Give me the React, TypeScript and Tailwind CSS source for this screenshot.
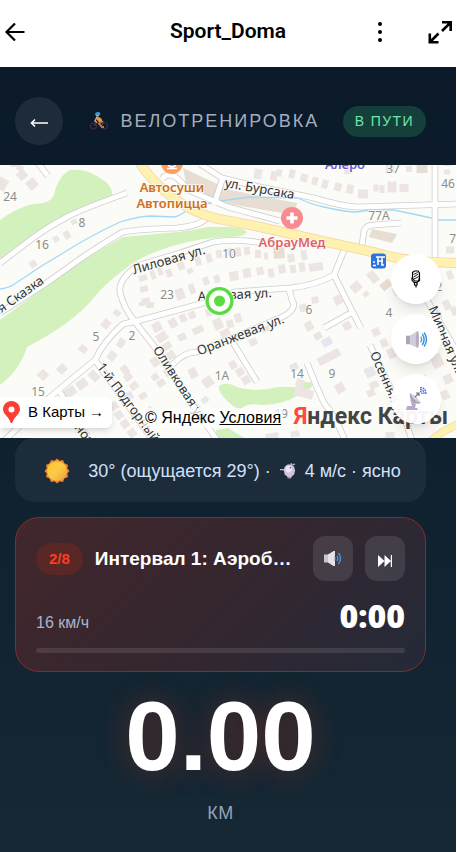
import React, { useState } from "react";

type Building = [number, number, number, number, number, string?];

interface MapLabel {
  text: string;
  x: number;
  y: number;
  angle?: number;
  size?: number;
  color?: string;
  weight?: number;
}

const TAN = "#e7ddd2";
const PALE = "#e8e8e8";

// x, y del centro, ancho, alto, rotación
const buildings: Building[] = [
  [22, 175, 9, 9, -40], [32, 184, 10, 10, 50], [2, 184, 10, 12, 30], [20, 168, 6, 6, 40], [14, 165, 8, 4, 0],
  [74, 222, 6, 5, -25], [67, 235, 6, 8, -30], [56, 239, 6, 6, -30, PALE], [33, 264, 7, 7, -35],
  [143, 278, 8, 6, -15], [144, 289, 8, 6, -15], [146, 301, 8, 6, -15], [153, 275, 5, 9, -20], [160, 271, 5, 9, -20],
  [169, 273, 6, 8, -20], [181, 266, 7, 8, -20], [190, 271, 6, 5, -20], [198, 261, 6, 9, -15], [209, 258, 6, 9, -15],
  [219, 254, 6, 8, -10], [180, 294, 9, 11, -20], [192, 289, 6, 10, -20], [206, 281, 6, 8, -20], [217, 279, 6, 8, -15],
  [230, 252, 5, 8, -10], [238, 252, 6, 9, -10], [247, 251, 6, 8, -10], [258, 254, 6, 8, 0], [266, 256, 4, 7, -8],
  [279, 253, 11, 11, -5, TAN], [291, 258, 7, 8, -8], [304, 255, 6, 10, -8], [234, 276, 9, 9, -10], [247, 273, 8, 9, -10],
  [260, 271, 7, 8, -10], [271, 273, 6, 9, -10], [282, 269, 7, 9, -10], [293, 269, 6, 8, -10], [302, 267, 6, 9, -10], [316, 267, 14, 8, -8],
  [258, 174, 8, 10, 10, PALE], [279, 173, 6, 7, 12], [292, 174, 6, 9, 12], [274, 176, 7, 9, 12], [304, 178, 7, 8, 14],
  [315, 181, 6, 8, 14], [325, 184, 6, 9, 15], [338, 187, 7, 8, 15], [350, 189, 7, 9, 15], [363, 194, 10, 9, 0],
  [348, 170, 8, 8, -8], [376, 188, 5, 7, 0], [382, 189, 5, 8, 0], [392, 187, 9, 11, 0], [404, 188, 9, 8, 0],
  [409, 169, 6, 6, 0], [422, 168, 11, 10, 0, TAN], [390, 169, 9, 8, 0], [447, 164, 8, 4, 0], [447, 172, 6, 5, 0],
  [373, 277, 8, 12, -40], [356, 287, 10, 9, -40], [366, 294, 6, 5, -40], [386, 285, 11, 8, -40, TAN], [397, 291, 8, 8, -30],
  [450, 250, 8, 7, 0], [450, 275, 6, 9, -20], [447, 305, 7, 10, -25], [454, 311, 6, 9, -25], [437, 315, 8, 10, -28],
  [106, 324, 8, 9, 40], [117, 313, 7, 6, 40], [83, 349, 8, 7, 40], [62, 369, 8, 9, 45], [43, 375, 9, 9, 45],
  [121, 343, 7, 9, 35], [112, 356, 8, 9, 40, PALE], [94, 376, 11, 8, 45], [82, 384, 11, 9, -35], [70, 392, 12, 9, -35],
  [125, 370, 7, 9, -35], [128, 377, 8, 7, -35], [134, 386, 8, 7, -35], [143, 396, 8, 6, -35], [129, 396, 8, 8, -35],
  [114, 406, 8, 8, -35], [119, 415, 8, 8, -35], [125, 424, 8, 8, -35], [132, 433, 8, 8, -35], [150, 411, 7, 8, -35],
  [102, 421, 8, 8, 45], [85, 433, 8, 7, 45], [60, 414, 10, 8, 40], [70, 420, 10, 7, 40],
  [155, 362, 8, 9, -35], [161, 383, 8, 7, -35], [155, 377, 7, 7, -35], [168, 372, 8, 8, -35], [171, 355, 8, 8, -35],
  [162, 337, 11, 9, -35], [167, 346, 9, 7, -35], [173, 323, 8, 9, -30], [150, 305, 8, 6, 0], [142, 304, 6, 4, 0],
  [157, 327, 9, 9, -30], [183, 318, 7, 8, -25], [192, 315, 7, 7, -25], [198, 330, 11, 7, -25], [182, 337, 8, 7, -25],
  [218, 324, 9, 11, -25], [225, 333, 10, 7, -25], [209, 312, 7, 8, -20], [193, 373, 8, 10, -25], [208, 382, 10, 10, -35],
  [205, 400, 7, 6, -40, PALE], [197, 408, 7, 7, -40], [240, 372, 8, 8, -30], [233, 365, 7, 8, -30], [246, 380, 8, 8, -30],
  [230, 324, 7, 8, -15], [238, 318, 7, 9, -15], [246, 334, 8, 8, -25], [253, 342, 8, 7, -25], [265, 328, 8, 8, -20],
  [309, 326, 8, 9, -30], [318, 336, 8, 7, -30], [327, 342, 10, 8, -30, "#e6e6ec"], [329, 357, 24, 8, -28],
  [294, 367, 8, 7, -30], [300, 383, 8, 8, 25], [304, 393, 19, 9, 15], [340, 388, 9, 10, -30],
  [376, 332, 8, 8, -25], [384, 343, 7, 8, -25], [392, 353, 9, 10, -25], [370, 372, 10, 10, -25, PALE], [374, 385, 9, 7, -25],
  [371, 393, 8, 7, -25], [347, 326, 8, 8, -30], [338, 300, 8, 9, -30], [303, 308, 7, 8, -10], [315, 300, 7, 7, -10],
  [437, 361, 11, 13, -25], [448, 379, 9, 9, -25], [424, 380, 8, 9, -25], [445, 395, 8, 9, -25],
  [272, 436, 13, 6, -10], [295, 434, 9, 6, -10], [390, 435, 9, 6, 0], [420, 408, 7, 8, 0],
];

const roads = [
  "M0 263 L33 238 Q48 227 67 217 Q82 209 127 193",
  "M0 313 L45 284 L83 257 Q112 238 123 232 Q142 229 177 228 Q200 226 208 217",
  "M262 243 Q236 238 213 242 L180 253 L137 266 Q118 280 120 292 Q123 307 135 322 L157 350 L187 397 L217 440",
  "M5 440 L50 397 L95 360 Q103 342 123 324 L137 321 L200 304 L234 292 L290 288 Q317 285 334 275 L345 248",
  "M95 360 L153 440",
  "M172 365 Q184 352 197 352 L240 335 L282 317 Q298 309 292 300 L289 289",
  "M334 275 L349 305 L361 328 M324 328 L351 313",
  "M232 341 L257 382",
  "M307 363 L316 385 L324 403 Q334 414 345 440",
  "M370 345 L404 417 L412 440",
  "M200 164 L222 178 L260 187 L314 198 Q340 206 357 207 L458 204",
  "M435 163 L435 260 M435 163 L435 177",
  "M362 245 L364 231 Q366 225 374 225 L401 223",
  "M405 262 L427 300 L458 354",
  "M38 163 L48 176",
  "M162 179 Q171 167 188 190 L228 207 L280 221",
  "M214 205 L222 180",
  "M60 392 L87 440",
];

const labels: MapLabel[] = [
  { text: "24", x: 10, y: 201, color: "#8d8d8d" },
  { text: "8", x: 82, y: 227, color: "#8d8d8d" },
  { text: "16", x: 42, y: 249, color: "#8d8d8d" },
  { text: "23", x: 167, y: 299, color: "#8d8d8d" },
  { text: "10", x: 229, y: 258, color: "#8d8d8d" },
  { text: "5", x: 96, y: 341, color: "#8d8d8d" },
  { text: "2", x: 132, y: 340, color: "#8d8d8d" },
  { text: "15", x: 38, y: 396, color: "#8d8d8d" },
  { text: "1А", x: 222, y: 380, color: "#8d8d8d" },
  { text: "6", x: 309, y: 314, color: "#8d8d8d" },
  { text: "4", x: 389, y: 317, color: "#8d8d8d" },
  { text: "14", x: 297, y: 378, color: "#8d8d8d" },
  { text: "9", x: 332, y: 378, color: "#8d8d8d" },
  { text: "19", x: 281, y: 418, color: "#8d8d8d" },
  { text: "37", x: 393, y: 173, color: "#8d8d8d" },
  { text: "46", x: 448, y: 188, color: "#8d8d8d" },
  { text: "77А", x: 379, y: 220, color: "#8d8d8d" },
  { text: "71", x: 456, y: 243, color: "#8d8d8d" },
  { text: "2", x: 439, y: 291, color: "#8d8d8d" },
  { text: "ая Сказка", x: 20, y: 300, angle: -35, size: 13 },
  { text: "Лиловая ул.", x: 170, y: 264, angle: -16, size: 13 },
  { text: "ул. Бурсака", x: 259, y: 193, angle: 10, size: 13 },
  { text: "Айвовая ул.", x: 235, y: 299, angle: -3, size: 13 },
  { text: "Оранжевая ул.", x: 242, y: 339, angle: -21, size: 13 },
  { text: "Оливковая ул.", x: 177, y: 387, angle: 57, size: 13 },
  { text: "1-й Подгорный пер.", x: 134, y: 417, angle: 53, size: 13 },
  { text: "Осенняя ул.", x: 385, y: 388, angle: 66, size: 13 },
  { text: "Мирная ул.", x: 442, y: 341, angle: 67, size: 13 },
  { text: "ном", x: 82, y: 438, angle: 52, size: 13 },
  { text: "Автосуши", x: 172, y: 192, color: "#cf6f22", size: 13, weight: 600 },
  { text: "Автопицца", x: 172, y: 208, color: "#cf6f22", size: 13, weight: 600 },
  { text: "АбрауМед", x: 292, y: 247, color: "#e0616b", size: 13, weight: 600 },
  { text: "Алеро", x: 345, y: 169, color: "#6f5bd8", size: 13, weight: 600 },
];

function StreetMap() {
  return (
    <svg
      className="block h-full w-full bg-[#fbfcf7]"
      viewBox="0 165 456 273"
      preserveAspectRatio="xMidYMid slice"
      fontFamily='"Noto Sans", "Open Sans", sans-serif'
    >
      {/* Zonas verdes */}
      <g fill="#d3f1bd">
        <path d="M0 220 Q18 207 33 204 Q50 204 54 195 Q58 176 70 170 Q86 168 100 178 Q114 186 112 197 L67 215 Q40 228 0 259Z" />
        <path d="M0 320 L45 287 L83 260 L123 237 L167 233 Q190 231 207 227 L230 227 Q244 228 247 232 Q244 237 229 237 Q200 238 180 244 Q150 252 133 263 Q105 283 92 300 Q70 325 27 347 Q20 370 0 385Z" />
        <path d="M219 386 Q226 381 237 387 Q255 393 278 387 L296 387 Q303 380 312 383 Q315 388 300 394 Q284 405 262 405 Q246 402 240 410 Q225 402 219 390Z" />
        <path d="M216 430 L228 428 L244 438 L216 438Z" />
      </g>
      <path d="M183 168 L230 190 L297 203 L294 215 L229 204 L213 199 L186 183Z" fill={TAN} />
      <path d="M372 229 L397 234 L392 243 L369 237Z" fill={TAN} />
      {buildings.map(([x, y, w, h, r, color], i) => (
        <rect
          key={i}
          x={x - w / 2}
          y={y - h / 2}
          width={w}
          height={h}
          fill={color || "#ece5e3"}
          transform={`rotate(${r} ${x} ${y})`}
        />
      ))}
      <path
        d="M0 289 Q8 288 13 285 L40 267 L63 253 Q90 236 120 222 Q140 216 150 216 L175 217 Q183 214 187 210 Q200 203 250 197 L298 198 Q310 204 324 207 Q345 212 357 212 Q372 209 394 210 L427 217 L440 220 L457 220"
        fill="none"
        stroke="#a3d8f5"
        strokeWidth="1.3"
      />
      {/* Calles */}
      <g fill="none" strokeLinejoin="round">
        {roads.map((d) => (
          <path key={d} d={d} stroke="#cfcfcf" strokeWidth="6.6" />
        ))}
        {roads.map((d) => (
          <path key={d} d={d} stroke="#ffffff" strokeWidth="5" />
        ))}
        <path d="M138 160 Q155 188 187 207 Q210 219 230 221 L260 227 L327 242 L377 253 Q405 262 458 263" stroke="#f4d3a0" strokeWidth="10" />
        <path d="M138 160 Q155 188 187 207 Q210 219 230 221 L260 227 L327 242 L377 253 Q405 262 458 263" stroke="#fff1b0" strokeWidth="8.6" />
        <path d="M428 443 Q440 432 460 423" stroke="#f4d3a0" strokeWidth="8" />
        <path d="M428 443 Q440 432 460 423" stroke="#fff1b0" strokeWidth="6.6" />
      </g>
      {labels.map((label) => (
        <text
          key={`${label.text}-${label.x}`}
          x={label.x}
          y={label.y}
          textAnchor="middle"
          fontSize={label.size || 12}
          fontWeight={label.weight || 400}
          fill={label.color || "#333333"}
          stroke="#fcfcf8"
          strokeWidth="1.6"
          strokeLinejoin="round"
          paintOrder="stroke"
          transform={label.angle ? `rotate(${label.angle} ${label.x} ${label.y})` : undefined}
        >
          {label.text}
        </text>
      ))}
      {/* Puntos de interés */}
      <circle cx="172" cy="163" r="11" fill="#ff9d5c" />
      <path d="M168 162h8q0 5-4 5t-4-5zM167 168.500h10" stroke="#fff" strokeWidth="1.500" fill="none" />
      <circle cx="292" cy="218" r="11" fill="#f78b8f" />
      <path d="M292 212.500v11M286.500 218h11" stroke="#fff" strokeWidth="3.600" />
      <rect x="371" y="253.500" width="15" height="15" rx="3" fill="#2f73e0" />
      <path d="M376 257h9M378 257v8M382 257v8M377 261h6M373 262h2M373 265.500h3M384 265h-3" stroke="#fff" strokeWidth="1.500" />
      {/* Posición actual */}
      <circle cx="219.500" cy="301" r="15" fill="#fff" />
      <circle cx="219.500" cy="301" r="12.400" fill="#fff" stroke="#58dc40" strokeWidth="3.400" />
      <circle cx="219.500" cy="301" r="5.500" fill="#58dc40" />
    </svg>
  );
}

function SpeakerIcon({ className }: { className: string }) {
  return (
    <svg className={className} viewBox="0 0 24 20" fill="none">
      <path d="M1 6h5v9H1z" fill="#aaa2b5" />
      <path d="M5 6l8-5q1.500 0 1.500 2v14q0 2-1.500 2l-8-4z" fill="#d3ccdb" />
      <path d="M12 1.500q2.500 0 2.500 8.500T12 18.500q-1.500-8 0-17z" fill="#b5acbf" />
      <path d="M16.500 7q2 3 0 6" stroke="#5b9fe0" strokeWidth="1.400" />
      <path d="M18 4q4 6 0 12M20 2.500q5 7.500 0 15" stroke="#3b8fe2" strokeWidth="1.500" />
    </svg>
  );
}

// altavoz claro para fondos oscuros
function SpeakerLightIcon() {
  return (
    <svg className="h-[15px] w-[18px]" viewBox="0 0 18 15" fill="none">
      <path d="M0 3.500h5v8H0z" fill="#c9c3d2" />
      <path d="M4 3.500L9.500 0H11v15H9.500L4 11.500z" fill="#e6e2ea" />
      <path d="M10.500 4.500q2 3 0 6z" fill="#9d95a8" />
      <path d="M13 5q1.500 2.500 0 5M14.500 2q4 5.500 0 11" stroke="#3f97ee" strokeWidth="1.400" />
    </svg>
  );
}

function MicIcon() {
  return (
    <svg className="h-[18px] w-[12px]" viewBox="0 0 12 18" fill="none" stroke="#000">
      <path d="M2.500 2.500L4.500 1H8l1.500 2v5L8.500 11h-4L2.500 8z" fill="#fff" strokeWidth="1.100" />
      <path d="M3.500 4.500l4-2M3.500 7l5-3M4 9l5-2.500" strokeWidth=".9" />
      <path d="M2 7.500V10L4 12.500h3l2.500-2V8M4.500 12.500v2.500H7v-2.500M6 15v2.500" strokeWidth="1.200" />
    </svg>
  );
}

function SatelliteIcon() {
  return (
    <svg className="h-[24px] w-[22px]" viewBox="0 0 22 24" fill="none">
      <path d="M5 12l6 5-1 4h2l1 2H1l1-4h5z" fill="#b9aac9" />
      <path d="M5 6q-1 6 3 9t8 1z" fill="#aaa0ba" />
      <path d="M5 6q6 2 11 10-7-1-11-10z" fill="#d5ccdd" />
      <path d="M10 10l4-4M11 6h3v3" stroke="#77707f" strokeWidth="1.200" />
      <path d="M15 4.500q2 0 2 2.500M15 2.500q4 0 4 4.500M15 .7q6 0 6 6.300" stroke="#3866d8" strokeWidth="1.200" strokeDasharray="2 .6" />
    </svg>
  );
}

function CyclistIcon() {
  return (
    <svg className="h-[18px] w-[18px] shrink-0" viewBox="0 0 18 18" fill="none">
      <circle cx="3.500" cy="14" r="3" stroke="#4b3049" strokeWidth="1" />
      <circle cx="14.500" cy="14" r="3" stroke="#4b3049" strokeWidth="1" />
      <path d="M4 14l3-4 4 4 3-5" stroke="#87304b" strokeWidth="1" />
      <path d="M6.500 4.500L11 6l2 4-3 1-3-3z" fill="#e29a3d" />
      <path d="M7 5l-2 4 2 1.500" stroke="#e8a36c" strokeWidth="1.500" />
      <path d="M11.500 9.500L9 11.500l3 3.500h2" stroke="#b87952" strokeWidth="1.800" />
      <circle cx="7.500" cy="3" r="1.800" fill="#d99a72" />
      <path d="M5 3q0-3 3-3t2 3z" fill="#3e9bd0" />
    </svg>
  );
}

function SunIcon() {
  return (
    <svg className="h-[26px] w-[26px] shrink-0" viewBox="0 0 26 26">
      <defs>
        <linearGradient id="sunFill" x1="0" y1="0" x2="1" y2="1">
          <stop offset="0" stopColor="#fdc62f" />
          <stop offset=".5" stopColor="#fbcb45" />
          <stop offset="1" stopColor="#e8a23a" />
        </linearGradient>
      </defs>
      <path
        d="M13 .5l2.500 2.300L19 2l1.300 3.300L24 7l-.7 3.500L25.500 13l-2.200 2.500L24 19l-3.700 1.500L19 24l-3.500-.8L13 25.500l-2.500-2.300L7 24l-1.400-3.500L2 19l.8-3.500L.5 13l2.300-2.500L2 7l3.600-1.700L7 2l3.500.8z"
        fill="#f58a2c"
      />
      <circle cx="13" cy="13" r="9.800" fill="url(#sunFill)" />
    </svg>
  );
}

function WindIcon() {
  return (
    <svg className="mx-1 inline-block h-4 w-4 align-[-2px]" viewBox="0 0 17 17" fill="none">
      <path d="M5 4l3-2.500h4L15 4l1 4-1 4-3 3H8l-3-3-1-4z" fill="#cfc3e0" />
      <path d="M6 5l3-2.500 3 1.500 1 4-4 2.500-3-2z" fill="#ece6f3" />
      <path d="M0 7h5M13 2l3-1M12 3V0M8 16l4-.5" stroke="#c6bbd6" strokeWidth="1.200" />
      <circle cx="11" cy="5" r=".8" fill="#5b5068" />
    </svg>
  );
}

export default function App() {
  const [soundOn, setSoundOn] = useState(true);

  return (
    <div className="mr-px min-h-screen bg-linear-to-b from-[#0a1828] to-[#152834] font-['Liberation_Sans',Arial,sans-serif] text-white">
      {/* Barra superior */}
      <header className="grid h-[67px] grid-cols-[1fr_auto_1fr] items-center bg-white pr-1 pb-1 pl-1 text-black">
        <button type="button" aria-label="Назад" className="w-6">
          <svg className="h-[22px] w-[22px]" viewBox="0 0 22 22" fill="none" stroke="currentColor" strokeWidth="2.200">
            <path d="M20.500 11H3M11 2.500L2.500 11l8.500 8.500" />
          </svg>
        </button>
        <h1 className="font-[Roboto,sans-serif] text-[21px] font-semibold">Sport_Doma</h1>
        <div className="flex items-center justify-end gap-10">
          <button type="button" aria-label="Меню">
            <svg className="h-6 w-4" viewBox="0 0 16 24" fill="currentColor">
              <circle cx="8" cy="4" r="2" />
              <circle cx="8" cy="12" r="2" />
              <circle cx="8" cy="20" r="2" />
            </svg>
          </button>
          <button type="button" aria-label="На весь экран" className="w-6">
            <svg className="h-6 w-6" viewBox="0 0 24 24" fill="none" stroke="currentColor" strokeWidth="2.600">
              <path d="M14 2.300h8.700V11M22 3l-8 8M1.800 13.500v8.700h8.700M2.500 21.500l8-8" />
            </svg>
          </button>
        </div>
      </header>

      {/* Título del entrenamiento */}
      <div className="flex items-center justify-between pt-[30px] pr-[30px] pb-5 pl-[15px]">
        <button type="button" aria-label="К списку" className="flex size-12 items-center justify-center rounded-full bg-white/8">
          <svg className="mt-1 h-[10px] w-[18px]" viewBox="0 0 18 10" fill="none" stroke="#fff" strokeWidth="1.600">
            <path d="M18 5H2M5 1.500L1.500 5 5 8.500" />
          </svg>
        </button>
        <h2 className="flex items-center gap-3 pl-1 text-lg tracking-[2px] text-[#a3adbf]">
          <CyclistIcon />
          ВЕЛОТРЕНИРОВКА
        </h2>
        <span className="rounded-full bg-[#143f3b] px-3 py-[5px] text-sm leading-[21px] tracking-widest text-[#6ee7a8]">
          В ПУТИ
        </span>
      </div>

      {/* Mapa */}
      <div className="relative h-[273px] overflow-hidden">
        <StreetMap />
        <a
          href="#maps"
          className="absolute bottom-[10px] left-0 flex h-[31px] items-center gap-2 rounded-r-md bg-white pr-2 pl-[3px] text-[15px] text-black shadow-md"
        >
          <svg className="h-[23px] w-[17px]" viewBox="0 0 17 23">
            <path d="M8.500 0C3.500 0 0 3.800 0 8.300c0 5.200 5.500 6.700 7.300 12.700.4 1.500 2 1.500 2.400 0C11.500 15 17 13.500 17 8.300 17 3.800 13.500 0 8.500 0z" fill="#fc3f32" />
            <circle cx="8.500" cy="8.500" r="3" fill="#fff" />
          </svg>
          В Карты →
        </a>
        <div className="absolute bottom-[10px] left-[143px] bg-white/70 px-[2px] text-base leading-5 text-black">
          © Яндекс{" "}
          <a href="#terms" className="underline">
            Условия
          </a>
        </div>
        <a
          href="#yandex"
          className="absolute right-2 bottom-[3px] font-[Roboto,'Noto_Sans',sans-serif] text-[23px] leading-9 font-bold text-[#444]"
        >
          <span className="text-[#ff4a42]">Я</span>ндекс Карты
        </a>
        <div className="absolute right-[15px] bottom-[14px] flex flex-col gap-[10px]">
          <button type="button" aria-label="Голос" className="flex size-[50px] items-center justify-center rounded-full bg-white/95 shadow-lg">
            <MicIcon />
          </button>
          <button type="button" aria-label="Звук" className="flex size-[50px] items-center justify-center rounded-full bg-white/95 shadow-lg">
            <SpeakerIcon className="h-[19px] w-[23px]" />
          </button>
          <button type="button" aria-label="Спутник" className="flex size-[50px] items-center justify-center rounded-full bg-white/95 shadow-lg">
            <SatelliteIcon />
          </button>
        </div>
      </div>

      <main className="pr-[30px] pb-7 pl-[15px]">
        {/* Clima */}
        <div className="flex h-16 items-center justify-center gap-[18px] rounded-[20px] border-t border-white/5 bg-[#1d2c3a] pl-1">
          <SunIcon />
          <p className="text-lg text-[#d0e0fb]">
            30° (ощущается 29°) · <WindIcon /> 4 м/с · ясно
          </p>
        </div>

        {/* Intervalo */}
        <section className="mt-[15px] rounded-3xl border border-[#7b302b] bg-linear-135 from-[#42272b] via-[#35262f] to-[#232a38] px-5 py-[18px]">
          <div className="flex items-center gap-3">
            <span className="rounded-full bg-[#5a2727] px-[13px] py-1 text-[15px] leading-6 font-bold text-[#ff3d1c]">2/8</span>
            <h3 className="min-w-0 flex-1 truncate text-[19px] leading-7 font-bold">Интервал 1: Аэробный</h3>
            <button
              type="button"
              aria-label="Звук интервала"
              onClick={() => setSoundOn(!soundOn)}
              className={`flex h-[45px] w-10 items-center justify-center rounded-xl bg-white/10 ${soundOn ? "" : "opacity-50"}`}
            >
              <SpeakerLightIcon />
            </button>
            <button type="button" aria-label="Следующий" className="flex h-[45px] w-10 items-center justify-center rounded-xl bg-white/10">
              <svg className="mt-1 h-3 w-[14px]" viewBox="0 0 14 12" fill="#fff">
                <path d="M0 0l6.500 6L0 12zM6.500 0L13 6l-6.500 6zM12.800 0H14v12h-1.200z" />
              </svg>
            </button>
          </div>
          <div className="mt-[15px] flex items-baseline justify-between">
            <span className="text-base text-[#a9b4d0]">16 км/ч</span>
            <span className="font-['Noto_Sans','Open_Sans',sans-serif] text-[32px] leading-10 font-black">0:00</span>
          </div>
          <div className="mt-3 h-[5px] rounded-full bg-white/10" />
        </section>

        {/* Distancia */}
        <div className="mt-[14px] text-center">
          <p className="text-[98px] leading-[100px] font-bold [text-shadow:0_0_30px_rgba(255,61,28,0.3)]">0.00</p>
          <p className="mt-[13px] text-lg tracking-wide text-[#94a3b8]">КМ</p>
        </div>
      </main>
    </div>
  );
}
